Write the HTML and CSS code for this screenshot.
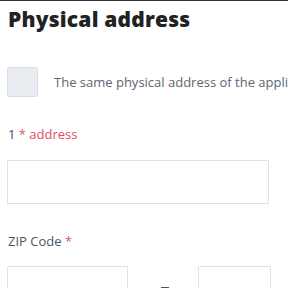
FILE: index.html
```html
<!DOCTYPE html>
<html lang="en">
<head>
    <meta charset="UTF-8">
    <title>Physical address</title>
    <link rel="stylesheet" href="styles.css">
</head>
<body>
    <div class="page">
        <h2 class="section-title">Physical address</h2>
        <label class="same-check">
            <span class="checkbox"></span>
            <span class="check-text">The same physical address of the applicant</span>
        </label>
        <div class="field">
            <label class="field-label"><span class="num">1</span> <span class="req">* address</span></label>
            <input class="text-input" type="text">
        </div>
        <div class="field">
            <label class="field-label">ZIP Code <span class="req">*</span></label>
            <div class="zip-row">
                <input class="text-input zip-a" type="text">
                <span class="dash"></span>
                <input class="text-input zip-b" type="text">
            </div>
        </div>
    </div>
</body>
</html>
```

FILE: styles.css
```css
html, body {
    margin: 0;
    background: #fff;
    font-family: "Open Sans", Arial, sans-serif;
    overflow: hidden;
}
body {
    border-top: 1px solid #333; /* dark strip along the top */
}
.page {
    padding: 0 0 0 7px;
    width: 262px;
}
.section-title {
    margin: 5px 0 0 1px;
    font-size: 21px;
    line-height: 26px;
    font-weight: 800;
    letter-spacing: 0.2px;
    color: #222;
}
.same-check {
    display: flex;
    align-items: center;
    gap: 16px;
    margin-top: 35px;
    width: 300px;
}
.checkbox {
    flex: none;
    width: 29px;
    height: 28px;
    background: #e9ecf0;
    border: 1px solid #dadee3;
    border-radius: 2px;
}
.check-text {
    font-size: 13px;
    color: #5d6571;
    white-space: nowrap;
}
.field {
    margin-top: 28px;
}
.field-label {
    display: block;
    margin-left: 1px;
    font-size: 13px;
    line-height: 18px;
    color: #4a5563;
}
.num {
    color: #3c4d66;
}
.req {
    color: #e0505e;
}
.text-input {
    display: block;
    box-sizing: border-box;
    width: 262px;
    height: 44px;
    margin-top: 17px;
    border: 1px solid #dfe1e4;
    border-radius: 1px;
    background: #fff;
}
.zip-row {
    display: flex;
    align-items: flex-start;
    margin-top: 16px;
}
.zip-row .text-input {
    margin-top: 0;
}
.zip-a {
    width: 121px;
}
.zip-b {
    width: 73px;
}
.dash {
    flex: none;
    width: 8px;
    height: 3px;
    margin: 21px 29px 0 33px;
    background: #555;
}
```
